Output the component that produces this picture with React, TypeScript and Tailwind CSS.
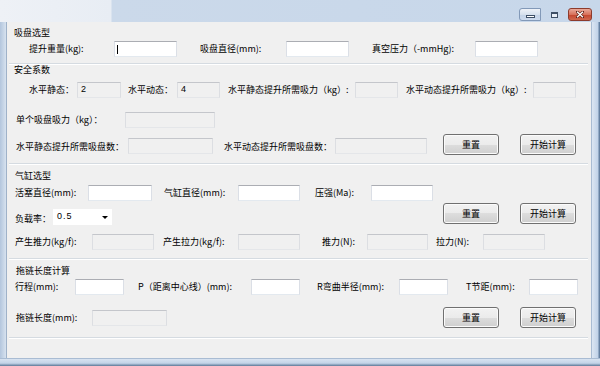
import React from "react";

type P = { children?: React.ReactNode; className?: string };

function L({ children, className = "" }: P) {
  return (
    <span className={`block shrink-0 whitespace-nowrap text-[9px] leading-[10px] text-black ${className}`}>
      {children}
    </span>
  );
}

function TB({ children, className = "" }: P) {
  return (
    <div className={`relative h-[16px] shrink-0 border border-[#abadb3] border-x-[#dbdfe6] border-b-[#e3e9ef] bg-white ${className}`}>
      {children}
    </div>
  );
}

function RO({ children, className = "" }: P) {
  return (
    <div className={`relative flex h-[16px] shrink-0 items-center border border-[#c4c6cb] border-x-[#dcdee2] border-b-[#e4e6e9] bg-[#f0f0f0] pl-[3px] [font-family:'Liberation_Sans',sans-serif] text-[9px] text-black ${className}`}>
      {children}
    </div>
  );
}

function Btn({ children, className = "" }: P) {
  return (
    <div className={`flex h-[21px] w-[56px] shrink-0 items-center justify-center rounded-[3px] border border-[#707070] bg-[linear-gradient(#f2f2f2_0%,#ebebeb_50%,#dddddd_50%,#cfcfcf_100%)] text-[9px] leading-[10px] text-black shadow-[inset_0_0_0_1px_#fbfbfb] ${className}`}>
      {children}
    </div>
  );
}

function Line({ className = "" }: P) {
  return <div className={`ml-[2px] mr-[3px] h-[2px] shrink-0 border-t border-[#d5dbe1] bg-white ${className}`} />;
}

export default function App() {
  return (
    <div className="flex h-[366px] w-[600px] flex-col overflow-hidden bg-[#c9d8ea] [font-family:'Noto_Sans_CJK_SC','Noto_Sans',sans-serif]">
      {/* title bar */}
      <div className="flex h-[22px] shrink-0 items-start justify-end bg-[linear-gradient(90deg,#eef1f6_0px,#e8edf4_111px,#cbd9ea_112px,#c7d7ea_100%)] pr-[8px] pt-[8px]">
        <div className="flex h-[13px] w-[22px] items-end justify-center rounded-l-[3px] border border-[#8299b8] bg-[linear-gradient(#eef2f8_0%,#d6e1ee_50%,#c3d3e7_51%,#cddbee_100%)] pb-[2px]">
          <div className="h-[3px] w-[9px] border border-[#3d4f66] bg-white" />
        </div>
        <div className="flex h-[13px] w-[27px] items-center justify-center">
          <div className="h-[6px] w-[7px] border border-t-2 border-[#3d4f66] bg-white/60" />
        </div>
        <div className="flex h-[13px] w-[24px] items-center justify-center rounded-[3px] border border-[#8d3b2c] bg-[linear-gradient(#e9a99a_0%,#d8725c_50%,#c4442c_51%,#d0684f_100%)]">
          <svg width="8" height="7" viewBox="0 0 8 7">
            <path d="M1 0.8 L7 6.2 M7 0.8 L1 6.2" stroke="#5a1a10" strokeWidth="2.6" strokeLinecap="square" />
            <path d="M1 0.8 L7 6.2 M7 0.8 L1 6.2" stroke="#ffffff" strokeWidth="1.5" />
          </svg>
        </div>
      </div>

      <div className="flex h-[336px] shrink-0">
        <div className="w-[7px] shrink-0 border-r border-[#9fb2c9] bg-[linear-gradient(90deg,#b3c6dd,#d7e2ef)]" />
        {/* client area */}
        <div className="flex w-[584px] shrink-0 flex-col bg-[#f0f0f0] pt-[5px]">
          <L className="ml-[7px] leading-[12px]">吸盘选型</L>
          <div className="mt-[2px] flex h-[16px] shrink-0 items-center">
            <L className="ml-[22px] w-[85px]">提升重量(kg):</L>
            <TB className="w-[63px]">
              <div className="absolute left-[2px] top-[3px] h-[9px] w-px bg-black" />
            </TB>
            <L className="ml-[23px] w-[86px]">吸盘直径(mm):</L>
            <TB className="w-[63px]" />
            <L className="ml-[23px] w-[103px]">真空压力（-mmHg):</L>
            <TB className="w-[63px]" />
          </div>

          <Line className="mt-[6px]" />
          <L className="ml-[7px]">安全系数</L>
          <div className="mt-[7px] flex h-[16px] shrink-0 items-center">
            <L className="ml-[22px] w-[48px]">水平静态：</L>
            <RO className="w-[44px]">2</RO>
            <L className="ml-[7px] w-[49px]">水平动态：</L>
            <RO className="w-[43px]">4</RO>
            <L className="ml-[8px] w-[127px]">水平静态提升所需吸力（kg）:</L>
            <RO className="w-[43px]" />
            <L className="ml-[8px] w-[127px]">水平动态提升所需吸力（kg）:</L>
            <RO className="w-[43px]" />
          </div>
          <div className="mt-[14px] flex h-[16px] shrink-0 items-center">
            <L className="ml-[9px] w-[109px]">单个吸盘吸力（kg）：</L>
            <RO className="w-[90px]" />
          </div>
          <div className="mt-[6px] flex h-[21px] shrink-0 items-start">
            <L className="ml-[9px] mt-[8px] w-[112px]">水平静态提升所需吸盘数：</L>
            <RO className="mt-[4px] w-[85px]" />
            <L className="ml-[11px] mt-[8px] w-[111px]">水平动态提升所需吸盘数：</L>
            <RO className="mt-[4px] w-[92px]" />
            <Btn className="ml-[16px]">重置</Btn>
            <Btn className="ml-[21px]">开始计算</Btn>
          </div>

          <Line className="mt-[8px]" />
          <L className="ml-[8px] mt-[6px]">气缸选型</L>
          <div className="mt-[4px] flex h-[16px] shrink-0 items-center">
            <L className="ml-[8px] w-[73px]">活塞直径(mm):</L>
            <TB className="w-[64px]" />
            <L className="ml-[12px] w-[74px]">气缸直径(mm):</L>
            <TB className="w-[62px]" />
            <L className="ml-[15px] w-[56px]">压强(Ma):</L>
            <TB className="w-[62px]" />
          </div>
          <div className="mt-[2px] flex h-[22px] shrink-0 items-start">
            <L className="ml-[8px] mt-[11px] w-[38px]">负载率：</L>
            <div className="relative mt-[6px] flex h-[16px] w-[59px] shrink-0 items-center bg-white pl-[4px] [font-family:'Liberation_Sans',sans-serif] text-[9px] tracking-[1px] text-black">
              0.5
              <div className="absolute right-[4px] top-[7px] h-0 w-0 border-x-[3px] border-t-[3px] border-x-transparent border-t-black" />
            </div>
            <Btn className="ml-[331px]">重置</Btn>
            <Btn className="ml-[21px]">开始计算</Btn>
          </div>
          <div className="mt-[9px] flex h-[16px] shrink-0 items-center">
            <L className="ml-[8px] w-[77px]">产生推力(kg/f):</L>
            <RO className="w-[62px]" />
            <L className="ml-[9px] w-[75px]">产生拉力(kg/f):</L>
            <RO className="w-[62px]" />
            <L className="ml-[22px] w-[45px]">推力(N):</L>
            <RO className="w-[61px]" />
            <L className="ml-[8px] w-[47px]">拉力(N):</L>
            <RO className="w-[62px]" />
          </div>

          <Line className="mt-[8px]" />
          <L className="ml-[9px] mt-[6px]">拖链长度计算</L>
          <div className="mt-[3px] flex h-[16px] shrink-0 items-center">
            <L className="ml-[8px] w-[60px]">行程(mm):</L>
            <TB className="w-[49px]" />
            <L className="ml-[14px] w-[113px]">P（距离中心线）(mm):</L>
            <TB className="w-[49px]" />
            <L className="ml-[17px] w-[82px]">R弯曲半径(mm):</L>
            <TB className="w-[49px]" />
            <L className="ml-[18px] w-[63px]">T节距(mm):</L>
            <TB className="w-[49px]" />
          </div>
          <div className="mt-[12px] flex h-[21px] shrink-0 items-center">
            <L className="ml-[9px] w-[76px]">拖链长度(mm):</L>
            <RO className="w-[75px]" />
            <Btn className="ml-[276px]">重置</Btn>
            <Btn className="ml-[21px]">开始计算</Btn>
          </div>
          <Line className="mt-[9px]" />
        </div>
        <div className="w-[9px] shrink-0 border-l border-[#a9bcd3] bg-[linear-gradient(90deg,#dce6f2,#c2d3e8_70%,#6f8aab_90%,#55708f)]" />
      </div>
      <div className="h-[8px] shrink-0 border-t border-[#a9bcd3] bg-[linear-gradient(#d8e3f0,#c3d4e8_60%,#5d7897)]" />
    </div>
  );
}
